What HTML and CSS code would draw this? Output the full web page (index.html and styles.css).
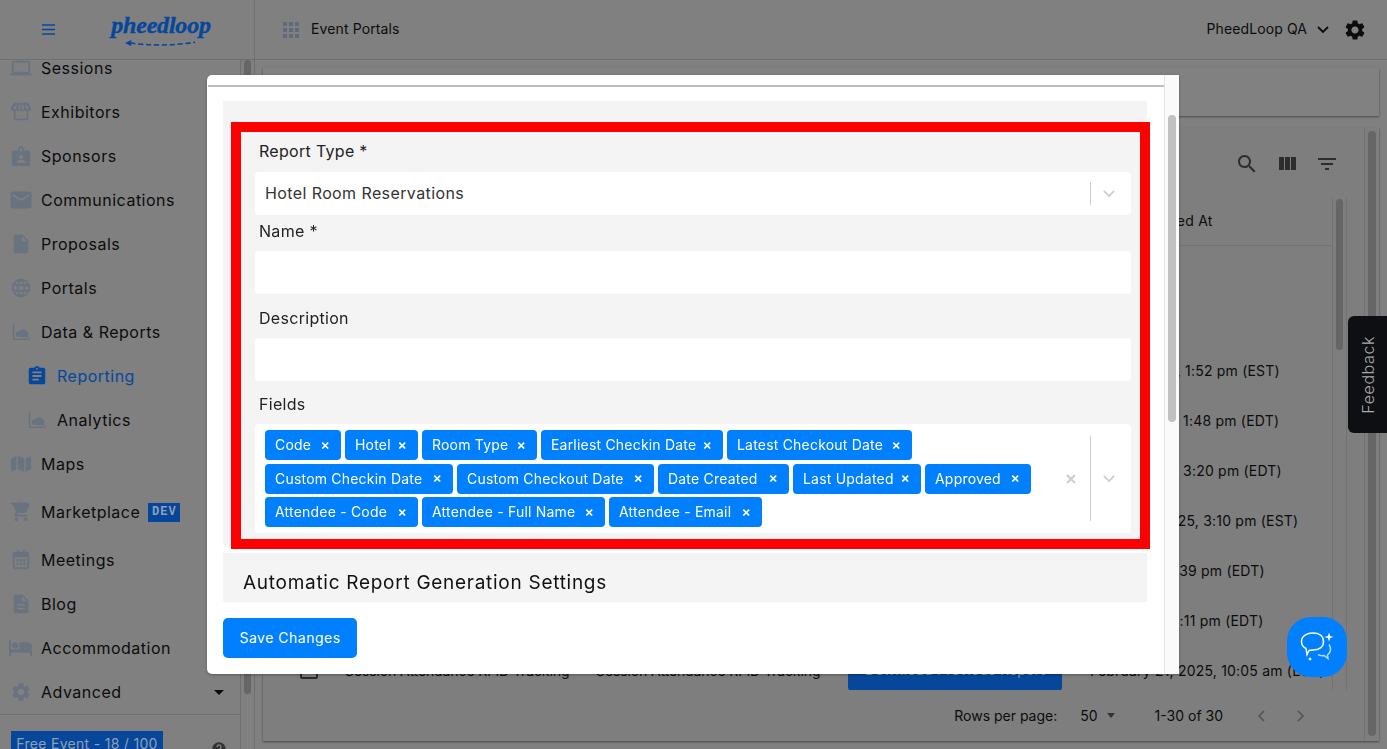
FILE: index.html
```html
<!DOCTYPE html>
<html lang="en">
<head>
<meta charset="utf-8">
<title>Event Portals</title>
<link rel="stylesheet" href="styles.css">
</head>
<body>
<div class="app">
  <header class="topbar">
    <div class="brand">
      <svg class="burger" viewBox="0 0 13 11"><path d="M0 1h13M0 5.500h13M0 10h13"/></svg>
      <div class="logo"><span class="logo-word">pheedloop</span>
        <svg class="logo-arrow" viewBox="0 0 82 8"><path class="logo-dash" d="M6 3.500c22 3 50 3 74-1"/><path class="logo-head" d="M0 3.500l7-3.500v7z"/></svg>
      </div>
    </div>
    <div class="crumb">
      <svg class="apps" viewBox="0 0 16 16"><path d="M0 0h4v4H0zM6 0h4v4H6zM12 0h4v4h-4zM0 6h4v4H0zM6 6h4v4H6zM12 6h4v4h-4zM0 12h4v4H0zM6 12h4v4H6zM12 12h4v4h-4z"/></svg>
      <span>Event Portals</span>
    </div>
    <div class="account">
      <span>PheedLoop QA</span>
      <svg class="acc-chev" viewBox="0 0 12 8"><path d="M1 1l5 5 5-5"/></svg>
      <svg class="gear" viewBox="0 0 24 24"><path d="M19.140 12.940c.04-.3.06-.61.06-.94 0-.32-.02-.64-.07-.94l2.030-1.580c.18-.14.23-.41.12-.61l-1.920-3.320c-.12-.22-.37-.29-.59-.22l-2.390.96c-.5-.38-1.030-.7-1.620-.94l-.36-2.540c-.04-.24-.24-.41-.48-.41h-3.840c-.24 0-.43.17-.47.41l-.36 2.540c-.59.24-1.130.57-1.620.94l-2.390-.96c-.22-.08-.47 0-.59.22L2.740 8.870c-.12.21-.08.47.12.61l2.030 1.580c-.05.3-.09.63-.09.94s.02.64.07.94l-2.030 1.580c-.18.14-.23.41-.12.61l1.920 3.320c.12.22.37.29.59.22l2.390-.96c.5.38 1.030.7 1.620.94l.36 2.540c.05.24.24.41.48.41h3.840c.24 0 .44-.17.47-.41l.36-2.540c.59-.24 1.130-.56 1.620-.94l2.390.96c.22.08.47 0 .59-.22l1.920-3.320c.12-.22.07-.47-.12-.61l-2.010-1.580zM12 15.600c-1.980 0-3.600-1.620-3.600-3.600s1.620-3.600 3.600-3.600 3.600 1.620 3.600 3.600-1.620 3.600-3.600 3.600z"/></svg>
    </div>
  </header>
  <div class="body">
    <aside class="sidebar">
      <div class="side-col">
        <nav class="nav">
          <a class="item"><svg class="ico" viewBox="0 0 24 24"><path d="M20 18c1.100 0 1.990-.9 1.990-2L22 6c0-1.100-.9-2-2-2H4c-1.100 0-2 .9-2 2v10c0 1.100.9 2 2 2H0v2h24v-2h-4zM4 6h16v10H4V6z"/></svg>Sessions</a>
          <a class="item"><svg class="ico" viewBox="0 0 24 24"><path d="M4 2h16l3 6c0 1.700-1.300 3-3 3v10H4V11C2.300 11 1 9.700 1 8zm2 2L4 8.500c.2.500.7.700 1.100.700.8 0 1.200-.5 1.300-1L7.500 4zm3.500 0L9 8.500c.2.500.9.700 1.400.700s1-.3 1-.8V4zM13 4v4.500c0 .5.500.8 1 .8s1.100-.2 1.300-.7L14.800 4zm3.800 0l1 4.500c.2.500.6.700 1.200.700.4 0 .8-.2 1-.7L18.200 4zM6 11.200V19h12v-7.800c-.7-.1-1.300-.4-1.800-.9-.6.6-1.300.9-2.100.9s-1.500-.3-2.100-.9c-.6.6-1.300.9-2.100.9s-1.500-.3-2.100-.9c-.5.500-1.100.8-1.800.9z"/></svg>Exhibitors</a>
          <a class="item"><svg class="ico" viewBox="0 0 24 24"><path d="M20 6h-5V4c0-1.600-1.400-3-3-3S9 2.400 9 4v2H4C2.900 6 2 6.900 2 8v13c0 1.100.9 2 2 2h16c1.100 0 2-.9 2-2V8c0-1.100-.9-2-2-2zM12 3c.6 0 1 .4 1 1v3h-2V4c0-.6.4-1 1-1zm0 8c1.200 0 2.200 1 2.200 2.200S13.200 15.400 12 15.400s-2.200-1-2.200-2.200S10.800 11 12 11zm4.500 8.500h-9v-1c0-1.500 3-2.300 4.500-2.300s4.500.8 4.500 2.300z"/></svg>Sponsors</a>
          <a class="item"><svg class="ico wide" viewBox="1.500 3.500 21 17"><path d="M20 4H4c-1.100 0-1.990.9-1.990 2L2 18c0 1.100.9 2 2 2h16c1.100 0 2-.9 2-2V6c0-1.100-.9-2-2-2zm0 4l-8 5-8-5V6l8 5 8-5z"/></svg>Communications</a>
          <a class="item"><svg class="ico" viewBox="0 0 24 24"><path d="M14 2H6c-1.100 0-1.990.9-1.990 2L4 20c0 1.100.89 2 1.990 2H18c1.100 0 2-.9 2-2V8zm-1 7V3.500L18.500 9z"/></svg>Proposals</a>
          <a class="item"><svg class="ico" viewBox="0 0 24 24"><path d="M11.990 2C6.470 2 2 6.480 2 12s4.470 10 9.990 10C17.520 22 22 17.520 22 12S17.520 2 11.990 2zm6.930 6h-2.950c-.32-1.250-.78-2.450-1.380-3.560 1.840.63 3.370 1.910 4.330 3.560zM12 4.040c.83 1.200 1.480 2.530 1.910 3.960h-3.820c.43-1.430 1.080-2.760 1.910-3.960zM4.260 14C4.100 13.360 4 12.690 4 12s.1-1.360.26-2h3.380c-.08.66-.14 1.320-.14 2 0 .68.06 1.340.14 2H4.260zm.82 2h2.950c.32 1.250.78 2.450 1.380 3.560-1.840-.63-3.370-1.900-4.330-3.560zm2.950-8H5.080c.96-1.660 2.490-2.930 4.330-3.560C8.810 5.550 8.350 6.750 8.030 8zM12 19.960c-.83-1.200-1.480-2.530-1.910-3.960h3.820c-.43 1.430-1.080 2.760-1.910 3.960zM14.340 14H9.660c-.09-.66-.16-1.320-.16-2 0-.68.07-1.350.16-2h4.680c.09.65.16 1.320.16 2 0 .68-.07 1.340-.16 2zm.25 5.560c.6-1.110 1.060-2.310 1.380-3.560h2.950c-.96 1.650-2.490 2.930-4.330 3.560zM16.360 14c.08-.66.14-1.320.14-2 0-.68-.06-1.340-.14-2h3.380c.16.64.26 1.310.26 2s-.1 1.360-.26 2h-3.380z"/></svg>Portals</a>
          <a class="item"><svg class="ico" viewBox="0 0 24 24"><path d="M3 3h1.700v16H22v1.700H3zM6.500 17v-3.500c1-2 2.200-3 4-3 1 0 1.500-.7 2.800-1.300 1.200-.5 2.700-.3 3.700 1 .5.700 1.500 1.300 3 1.800v6z"/></svg>Data &amp; Reports</a>
          <a class="item sub active"><svg class="ico" viewBox="0 0 24 24"><path d="M19 3h-4.180C14.400 1.840 13.300 1 12 1c-1.300 0-2.400.84-2.820 2H5c-1.100 0-2 .9-2 2v14c0 1.100.9 2 2 2h14c1.100 0 2-.9 2-2V5c0-1.100-.9-2-2-2zm-7 0c.55 0 1 .45 1 1s-.45 1-1 1-1-.45-1-1 .45-1 1-1zm2 14H7v-2h7v2zm3-4H7v-2h10v2zm0-4H7V7h10v2z"/></svg>Reporting</a>
          <a class="item sub"><svg class="ico" viewBox="0 0 24 24"><path d="M3 3h1.700v16H22v1.700H3zM6.500 17v-3.500c1-2 2.200-3 4-3 1 0 1.500-.7 2.800-1.300 1.200-.5 2.700-.3 3.700 1 .5.700 1.500 1.300 3 1.800v6z"/></svg>Analytics</a>
          <a class="item"><svg class="ico" viewBox="0 0 24 24"><path d="M1 6l6-2.500V18L1 20.500zM8.500 3.500l7 2.500v14.500l-7-2.500zM17 6l6-2.500V18l-6 2.500z"/></svg>Maps</a>
          <a class="item tall"><svg class="ico" viewBox="0 0 24 24"><path d="M11 9h2V6h3V4h-3V1h-2v3H8v2h3v3zm-4 9c-1.100 0-1.990.9-1.990 2S5.900 22 7 22s2-.9 2-2-.9-2-2-2zm10 0c-1.100 0-1.990.9-1.990 2s.89 2 1.990 2 2-.9 2-2-.9-2-2-2zM1 2v2h2l3.600 7.590-1.350 2.450C4.500 15.500 5.500 17 7 17h12v-2H7.400l1.100-2h7.500c.75 0 1.410-.41 1.750-1.030L21.700 5 20 2H5z"/></svg>Marketplace<span class="dev">DEV</span></a>
          <a class="item"><svg class="ico" viewBox="0 0 24 24"><path d="M8 1h2v2h4V1h2v2h3c1.100 0 2 .9 2 2v15c0 1.100-.9 2-2 2H5c-1.100 0-2-.9-2-2V5c0-1.100.9-2 2-2h3zM5 9v11h14V9zm2 2h2.500v2.500H7zm3.750 0h2.500v2.500h-2.500zm3.750 0H17v2.500h-2.500zM7 15h2.500v2.500H7zm3.750 0h2.500v2.500h-2.500zm3.750 0H17v2.500h-2.500z"/></svg>Meetings</a>
          <a class="item"><svg class="ico" viewBox="0 0 24 24"><path d="M14 2H6c-1.100 0-1.990.9-1.990 2L4 20c0 1.100.89 2 1.990 2H18c1.100 0 2-.9 2-2V8l-6-6zm2 16H8v-2h8v2zm0-4H8v-2h8v2zm-3-5V3.500L18.500 9H13z"/></svg>Blog</a>
          <a class="item"><svg class="ico bed" viewBox="1 5 22 15"><path d="M7 13c1.660 0 3-1.340 3-3S8.660 7 7 7s-3 1.340-3 3 1.340 3 3 3zm12-6h-8v7H3V5H1v15h2v-3h18v3h2v-9c0-2.210-1.790-4-4-4z"/></svg>Accommodation</a>
          <a class="item"><svg class="ico" viewBox="0 0 24 24"><path d="M19.140 12.940c.04-.3.06-.61.06-.94 0-.32-.02-.64-.07-.94l2.030-1.580c.18-.14.23-.41.12-.61l-1.920-3.320c-.12-.22-.37-.29-.59-.22l-2.390.96c-.5-.38-1.030-.7-1.620-.94l-.36-2.540c-.04-.24-.24-.41-.48-.41h-3.840c-.24 0-.43.17-.47.41l-.36 2.540c-.59.24-1.130.57-1.620.94l-2.390-.96c-.22-.08-.47 0-.59.22L2.740 8.870c-.12.21-.08.47.12.61l2.030 1.580c-.05.3-.09.63-.09.94s.02.64.07.94l-2.030 1.580c-.18.14-.23.41-.12.61l1.920 3.320c.12.22.37.29.59.22l2.390-.96c.5.38 1.030.7 1.620.94l.36 2.540c.05.24.24.41.48.41h3.840c.24 0 .44-.17.47-.41l.36-2.540c.59-.24 1.130-.56 1.620-.94l2.390.96c.22.08.47 0 .59-.22l1.920-3.320c.12-.22.07-.47-.12-.61l-2.010-1.580zM12 15.600c-1.980 0-3.600-1.620-3.600-3.600s1.620-3.600 3.600-3.600 3.600 1.620 3.600 3.600-1.620 3.600-3.600 3.600z"/></svg>Advanced<i class="caret"></i></a>
        </nav>
        <div class="side-foot">
          <span class="plan">Free Event - 18 / 100</span>
          <svg class="help" viewBox="0 0 24 24"><path d="M12 2C6.480 2 2 6.480 2 12s4.480 10 10 10 10-4.480 10-10S17.520 2 12 2zm1 17h-2v-2h2zm2.070-7.750l-.9.920C13.450 12.900 13 13.500 13 15h-2v-.5c0-1.100.45-2.100 1.170-2.830l1.240-1.260c.37-.36.59-.86.59-1.410 0-1.100-.9-2-2-2s-2 .9-2 2H8c0-2.210 1.790-4 4-4s4 1.790 4 4c0 .88-.36 1.680-.93 2.250z"/></svg>
        </div>
      </div>
      <div class="side-track"><div class="side-thumb"></div></div>
    </aside>
    <main class="main">
      <div class="page-card"></div>
      <section class="table-card">
        <div class="table-wrap">
          <div class="toolbar">
            <svg class="tool" viewBox="0 0 24 24"><path d="M15.500 14h-.79l-.28-.27C15.410 12.590 16 11.110 16 9.500 16 5.910 13.090 3 9.500 3S3 5.910 3 9.500 5.910 16 9.500 16c1.610 0 3.090-.59 4.230-1.570l.27.28v.79l5 4.990L20.490 19l-4.990-5zm-6 0C7.010 14 5 11.990 5 9.500S7.010 5 9.500 5 14 7.010 14 9.500 11.990 14 9.500 14z"/></svg>
            <svg class="tool" viewBox="0 0 24 24"><path d="M10 18h5V5h-5v13zm-6 0h5V5H4v13zM16 5v13h5V5h-5z"/></svg>
            <svg class="tool" viewBox="0 0 24 24"><path d="M10 18h4v-2h-4v2zM3 6v2h18V6H3zm3 7h12v-2H6v2z"/></svg>
          </div>
          <div class="grid-zone">
            <div class="rows">
              <div class="row head"><span></span><span></span><span></span><span></span><span class="head-date">Updated At</span></div>
              <div class="row"></div>
              <div class="row"></div>
              <div class="row"><span></span><span></span><span></span><span></span><span>Jan 12, 2025, 1:52 pm (EST)</span></div>
              <div class="row"><span></span><span></span><span></span><span></span><span>April 1, 2025, 1:48 pm (EDT)</span></div>
              <div class="row"><span></span><span></span><span></span><span></span><span>April 1, 2025, 3:20 pm (EDT)</span></div>
              <div class="row"><span></span><span></span><span></span><span></span><span>March 14, 2025, 3:10 pm (EST)</span></div>
              <div class="row"><span></span><span></span><span></span><span></span><span>May 2025, 3:39 pm (EDT)</span></div>
              <div class="row"><span></span><span></span><span></span><span></span><span>June 2025, 2:11 pm (EDT)</span></div>
              <div class="row"><span class="box"></span><span class="name">Session Attendance RFID Tracking</span><span class="name">Session Attendance RFID Tracking</span><span class="dl">Download Previous Report</span><span>February 21, 2025, 10:05 am (EST)</span></div>
            </div>
            <div class="inner-track"><div class="inner-thumb"></div></div>
          </div>
          <div class="pager">
            <span class="p-rows">Rows per page:</span>
            <span class="p-num">50</span><i class="p-caret"></i>
            <span class="p-range">1-30 of 30</span>
            <svg class="p-arrow" viewBox="0 0 8 12"><path d="M7 1L2 6l5 5"/></svg>
            <svg class="p-arrow" viewBox="0 0 8 12"><path d="M1 1l5 5-5 5"/></svg>
          </div>
        </div>
        <div class="outer-track"><div class="outer-thumb"></div></div>
      </section>
    </main>
  </div>
</div>

<aside class="feedback"><span>Feedback</span></aside>
<button class="chat" type="button" aria-label="Chat">
  <svg viewBox="0 0 34 34"><path class="chat-a" d="M13 3c6 0 10.500 3 10.500 8.500S19 20 13 20c-1.500 0-3 0-4 .5L7 24.500l-1-6C3 17 1.500 14.500 1.500 11.500 1.500 6 7 3 13 3z"/><path class="chat-b" d="M29 14.500c2.500 3.500 2 8-1.500 10.500l.5 3.500-4-3c-2 .3-4 .2-6-.8"/><path class="chat-c" d="M29 2.500l1.100 3.400 3.400 1.100-3.400 1.100-1.100 3.400-1.100-3.400L24.500 7l3.400-1.100zM10 27l.7 1.300 1.300.7-1.300.7L10 31l-.7-1.300L8 29l1.300-.7z"/></svg>
</button>

<div class="modal" role="dialog">
  <div class="modal-main">
    <div class="modal-head"></div>
    <div class="modal-body">
      <div class="section">
        <div class="marked">
          <label class="lbl lbl-first">Report Type *</label>
          <div class="control select">
            <span class="value">Hotel Room Reservations</span>
            <i class="sep"></i>
            <svg class="chev" viewBox="0 0 14 8"><path d="M1 1l6 6 6-6"/></svg>
          </div>
          <label class="lbl lbl-name">Name *</label>
          <div class="control"></div>
          <label class="lbl lbl-desc">Description</label>
          <div class="control"></div>
          <label class="lbl">Fields</label>
          <div class="multi">
            <div class="tags">
              <div class="tag-row">
                <span class="tag t1">Code<b>×</b></span>
                <span class="tag t2">Hotel<b>×</b></span>
                <span class="tag t3">Room Type<b>×</b></span>
                <span class="tag t4">Earliest Checkin Date<b>×</b></span>
                <span class="tag t5">Latest Checkout Date<b>×</b></span>
              </div>
              <div class="tag-row">
                <span class="tag t6">Custom Checkin Date<b>×</b></span>
                <span class="tag t7">Custom Checkout Date<b>×</b></span>
                <span class="tag t8">Date Created<b>×</b></span>
                <span class="tag t9">Last Updated<b>×</b></span>
                <span class="tag t10">Approved<b>×</b></span>
              </div>
              <div class="tag-row">
                <span class="tag t11">Attendee - Code<b>×</b></span>
                <span class="tag t12">Attendee - Full Name<b>×</b></span>
                <span class="tag t13">Attendee - Email<b>×</b></span>
              </div>
            </div>
            <svg class="clear" viewBox="0 0 10 10"><path d="M1 1l8 8M9 1l-8 8"/></svg>
            <i class="sep sep-tall"></i>
            <svg class="chev" viewBox="0 0 14 8"><path d="M1 1l6 6 6-6"/></svg>
          </div>
        </div>
      </div>
      <div class="section section-2"><h2>Automatic Report Generation Settings</h2></div>
    </div>
    <div class="modal-foot"><button class="save" type="button">Save Changes</button></div>
  </div>
  <div class="modal-track"><div class="modal-thumb"></div></div>
</div>
</body>
</html>
```
FILE: styles.css
```css
* { box-sizing: border-box; }
html, body { margin: 0; height: 100%; overflow: hidden; }
body {
  font-family: Inter, "Noto Sans", sans-serif;
  font-size: 14px;
  color: #0c0c0c;
  background: #808080;
  letter-spacing: .3px;
}
svg { display: block; flex: none; }

.app { height: 749px; display: flex; flex-direction: column; }

/* top bar */
.topbar { height: 60px; flex: none; display: flex; border-bottom: 1px solid #6f6f6f; }
.brand { width: 255px; flex: none; display: flex; align-items: center; padding-left: 42px; border-right: 1px solid #6f6f6f; }
.burger { width: 13px; height: 11px; fill: none; stroke: #06479c; stroke-width: 1.600; }
.logo { margin-left: 56px; width: 100px; height: 36px; display: flex; flex-direction: column; align-items: center; }
.logo-word { font: italic 700 24px/27px "Liberation Serif", serif; letter-spacing: -.2px; color: #06479c; -webkit-text-stroke: .4px #06479c; }
.logo-arrow { width: 74px; height: 7px; margin-top: 1px; }
.logo-dash { fill: none; stroke: #06479c; stroke-width: 1.800; stroke-dasharray: 6 3; }
.logo-head { fill: #06479c; }
.crumb { display: flex; align-items: center; gap: 12px; padding: 0 0 2px 28px; flex: 1; letter-spacing: .12px; }
.apps { width: 16px; height: 16px; fill: #5f6a7a; margin-top: 2px; }
.account { display: flex; align-items: center; padding: 0 20px 2px 0; letter-spacing: .1px; }
.acc-chev { width: 12px; height: 8px; margin-left: 10px; fill: none; stroke: #0c0c0c; stroke-width: 1.800; margin-top: 2px; }
.gear { width: 24px; height: 24px; margin-left: 14px; fill: #0c0c0c; margin-top: 2px; }

.body { flex: 1; display: flex; min-height: 0; }

/* sidebar */
.sidebar { width: 255px; flex: none; display: flex; border-right: 1px solid #6f6f6f; overflow: hidden; }
.side-col { width: 241px; flex: none; display: flex; flex-direction: column; border-right: 1px solid #6f6f6f; overflow: hidden; }
.nav { margin-top: -14px; flex: none; height: 668px; }
.item { height: 44px; display: flex; align-items: center; padding-left: 10px; font-size: 16px; letter-spacing: .5px; color: #0c0c0c; }
.item.tall { height: 52px; }
.ico { width: 22px; height: 22px; margin-right: 9px; fill: #69727f; }
.ico.wide { width: 22px; height: 18px; }
.ico.bed { width: 23px; height: 16px; margin-left: -1px; }
.sub { padding-left: 26px; }
.active { color: #06479c; }
.active .ico { fill: #06479c; }
.dev { margin-left: 8px; width: 32px; height: 19px; background: #06479c; color: #8fa0b5; font: 700 12px/19px "Liberation Mono", monospace; text-align: center; letter-spacing: 1px; }
.caret { margin-left: auto; margin-right: 16px; border: 5px solid transparent; border-top: 5px solid #0c0c0c; border-bottom: 0; }
.side-foot { flex: 1; border-top: 1px solid #6f6f6f; display: flex; align-items: flex-start; padding: 16px 0 0 11px; }
.plan { width: 152px; height: 24px; background: #06479c; color: #8fa0b5; font-size: 14px; line-height: 25px; text-align: center; flex: none; }
.help { width: 16px; height: 16px; margin: 10px 0 0 48px; fill: #333; }
.side-track { flex: 1; padding: 0 3px; }
.side-thumb { height: 634px; background: #666; border-radius: 4px; }

/* main */
.main { flex: 1; min-width: 0; padding: 8px; display: flex; flex-direction: column; gap: 12px; }
.page-card { height: 48px; flex: none; background: #818181; box-shadow: 0 1px 2px rgba(0,0,0,.45); }
.table-card { flex: 1; min-height: 0; display: flex; background: #7e7e7e; box-shadow: 0 1px 2px rgba(0,0,0,.45); }
.table-wrap { flex: 1; min-width: 0; display: flex; flex-direction: column; border-right: 1px solid #727272; }
.toolbar { height: 64px; flex: none; display: flex; justify-content: flex-end; align-items: center; gap: 16px; padding: 8px 25px 0 0; }
.tool { width: 24px; height: 24px; fill: #2d2d2d; }
.grid-zone { flex: 1; min-height: 0; display: flex; margin: 6px 17px 0 0; }
.rows { flex: 1; min-width: 0; overflow: hidden; height: 492px; }
.row { height: 50px; display: grid; grid-template-columns: 82px 251px 252px 242px 1fr; align-items: center; white-space: nowrap; letter-spacing: .2px; }
.row.head { height: 48px; border-bottom: 1px solid #727272; padding-bottom: 3px; }
.row.head + .row { height: 49px; }
.head-date { padding-left: 46px; }
.name { letter-spacing: -.1px; }
.box { width: 18px; height: 18px; margin-left: 37px; border: 2px solid #2a2a2a; border-radius: 2px; }
.dl { width: 214px; height: 42px; background: #06479c; border-radius: 4px; color: #8fa0b5; text-align: center; line-height: 42px; }
.inner-track { width: 15px; flex: none; border-left: 1px solid #727272; border-right: 1px solid #727272; padding: 1px 3px 0; height: 492px; }
.inner-thumb { height: 151px; background: #666; border-radius: 4px; }
.pager { height: 51px; flex: none; display: flex; align-items: center; padding-right: 59px; justify-content: flex-end; letter-spacing: 0; }
.p-num { margin-left: 23px; }
.p-caret { margin: 0 0 0 9px; border: 4.500px solid transparent; border-top: 5px solid #333; border-bottom: 0; }
.p-range { margin-left: 40px; margin-right: 34px; }
.p-arrow { width: 8px; height: 12px; fill: none; stroke: #555; stroke-width: 1.700; }
.p-arrow + .p-arrow { margin-left: 32px; }
.outer-track { width: 14px; flex: none; padding: 3px 3px 5px; }
.outer-thumb { height: 100%; background: #666; border-radius: 4px; }

/* floating */
.feedback { position: fixed; right: 0; top: 316px; width: 39px; height: 117px; background: #0d0f12; border-radius: 6px 0 0 6px; display: flex; align-items: center; justify-content: center; }
.feedback span { writing-mode: vertical-rl; transform: rotate(180deg); color: #a9a9a9; font-size: 16px; font-weight: 300; letter-spacing: .6px; }
.chat { position: fixed; left: 1287px; top: 617px; width: 60px; height: 60px; padding: 13px; border: 0; border-radius: 24px; background: #007fff; }
.chat svg { width: 34px; height: 34px; fill: none; stroke: #fff; stroke-width: 1.500; }
.chat-b { stroke: #b9dcff; }
.chat-c { fill: #fff; stroke: none; }

/* modal */
.modal { position: fixed; left: 207px; top: 75px; width: 972px; height: 599px; display: flex; background: #fff; border-radius: 5px 0 0 5px; box-shadow: 0 1px 3px rgba(0,0,0,.3); overflow: hidden; }
.modal-main { width: 957px; flex: none; display: flex; flex-direction: column; }
.modal-head { height: 12px; flex: none; margin-left: 1px; border-bottom: 2px solid #bdbdbd; }
.modal-body { padding: 14px 0 0 16px; height: 515px; flex: none; overflow: hidden; }
.section { width: 924px; height: 444px; background: #f4f4f4; padding: 21px 0 0 8px; }
.section-2 { height: 49px; margin-top: 8px; padding: 18px 0 0 20px; }
.section-2 h2 { margin: 0; font-size: 19px; line-height: 24px; font-weight: 400; letter-spacing: .72px; color: #111; }
.marked { width: 919px; height: 427px; border: 10px solid #f00; padding: 0 9px 0 14px; }
.lbl { display: block; height: 19px; margin: 14px 0 0 4px; font-size: 16px; line-height: 19px; letter-spacing: .3px; color: #222; }
.lbl-first { margin-top: 10px; }
.lbl-name { margin: 7px 0 -1px 4px; }
.lbl-desc { margin: 15px 0 -1px 4px; }
.control { height: 43px; margin-top: 11px; background: #fff; border-radius: 4px; display: flex; align-items: center; padding: 0 16px 0 10px; }
.value { flex: 1; font-size: 16px; letter-spacing: .4px; color: #333; padding-bottom: 2px; }
.sep { width: 1px; height: 23px; background: #ccc; display: block; margin-right: 12px; }
.sep-tall { height: 85px; }
.chev { width: 12px; height: 7px; fill: none; stroke: #ccc; stroke-width: 2; }
.multi { height: 109px; margin-top: 10px; background: #fff; border-radius: 4px; display: flex; align-items: center; padding: 0 16px 0 10px; }
.tags { flex: 1; display: flex; flex-direction: column; gap: 3.500px; }
.tag-row { display: flex; gap: 4px; }
.tag { height: 30px; display: flex; align-items: center; padding: 0 11px 1px 10px; background: #007fff; border-radius: 4px; color: #fff; font-size: 14px; letter-spacing: .2px; white-space: nowrap; }
.tag b { margin-left: auto; font-size: 14px; font-weight: 600; line-height: 1; }
.t1 { width: 76px; } .t2 { width: 73px; } .t3 { width: 115px; } .t4 { width: 182px; } .t5 { width: 185px; }
.t6 { width: 188px; } .t7 { width: 197px; } .t8 { width: 131px; } .t9 { width: 128px; } .t10 { width: 106px; }
.t11 { width: 153px; } .t12 { width: 183px; } .t13 { width: 153px; }
.clear { width: 10px; height: 10px; margin-right: 14px; fill: none; stroke: #ccc; stroke-width: 2; }
.modal-foot { padding: 16px 0 0 16px; }
.save { display: block; width: 134px; height: 40px; border: 0; border-radius: 5px; background: #007fff; color: #fff; font: inherit; letter-spacing: .5px; padding: 0 0 2px; }
.modal-track { flex: 1; background: #fafafa; border-left: 1px solid #e4e4e4; padding: 40px 3px 0 3px; }
.modal-thumb { height: 307px; background: #c1c1c1; border-radius: 4px; }
```
